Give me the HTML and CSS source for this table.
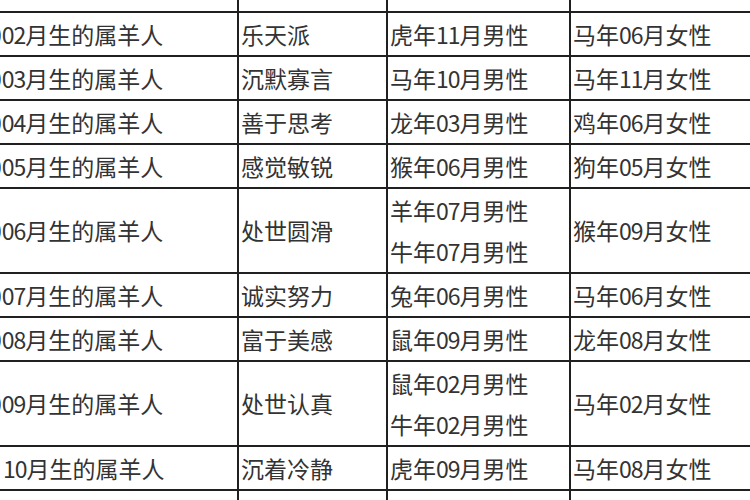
FILE: index.html
```html
<!DOCTYPE html>
<html lang="zh">
<head>
<meta charset="utf-8">
<title>属羊人</title>
<link rel="stylesheet" href="styles.css">
</head>
<body>
<div class="sheet">
  <div class="c first"></div>
  <div class="c"></div>
  <div class="c"></div>
  <div class="c"></div>

  <div class="c first"><span class="lead">0</span><span class="n">02</span>月生的属羊人</div>
  <div class="c">乐天派</div>
  <div class="c">虎年<span class="n">11</span>月男性</div>
  <div class="c">马年<span class="n">06</span>月女性</div>

  <div class="c first"><span class="lead">0</span><span class="n">03</span>月生的属羊人</div>
  <div class="c">沉默寡言</div>
  <div class="c">马年<span class="n">10</span>月男性</div>
  <div class="c">马年<span class="n">11</span>月女性</div>

  <div class="c first"><span class="lead">0</span><span class="n">04</span>月生的属羊人</div>
  <div class="c">善于思考</div>
  <div class="c">龙年<span class="n">03</span>月男性</div>
  <div class="c">鸡年<span class="n">06</span>月女性</div>

  <div class="c first"><span class="lead">0</span><span class="n">05</span>月生的属羊人</div>
  <div class="c">感觉敏锐</div>
  <div class="c">猴年<span class="n">06</span>月男性</div>
  <div class="c">狗年<span class="n">05</span>月女性</div>

  <div class="c first"><span class="lead">0</span><span class="n">06</span>月生的属羊人</div>
  <div class="c">处世圆滑</div>
  <div class="c two"><div>羊年<span class="n">07</span>月男性</div><div>牛年<span class="n">07</span>月男性</div></div>
  <div class="c">猴年<span class="n">09</span>月女性</div>

  <div class="c first"><span class="lead">0</span><span class="n">07</span>月生的属羊人</div>
  <div class="c">诚实努力</div>
  <div class="c">兔年<span class="n">06</span>月男性</div>
  <div class="c">马年<span class="n">06</span>月女性</div>

  <div class="c first"><span class="lead">0</span><span class="n">08</span>月生的属羊人</div>
  <div class="c">富于美感</div>
  <div class="c">鼠年<span class="n">09</span>月男性</div>
  <div class="c">龙年<span class="n">08</span>月女性</div>

  <div class="c first"><span class="lead">0</span><span class="n">09</span>月生的属羊人</div>
  <div class="c">处世认真</div>
  <div class="c two"><div>鼠年<span class="n">02</span>月男性</div><div>牛年<span class="n">02</span>月男性</div></div>
  <div class="c">马年<span class="n">02</span>月女性</div>

  <div class="c first"><span class="n">10</span>月生的属羊人</div>
  <div class="c">沉着冷静</div>
  <div class="c">虎年<span class="n">09</span>月男性</div>
  <div class="c">马年<span class="n">08</span>月女性</div>

  <div class="c first"></div>
  <div class="c"></div>
  <div class="c"></div>
  <div class="c"></div>
</div>
</body>
</html>
```

FILE: styles.css
```css
html, body {
  margin: 0;
  padding: 0;
  background: #ffffff;
  overflow: hidden;
}

body {
  width: 750px;
  height: 500px;
}

.sheet {
  display: grid;
  grid-template-columns: 265px 147px 181px 260px;
  grid-auto-rows: minmax(42px, auto);
  gap: 2px;
  padding: 2px;
  margin: -33px 0 0 -30px;
  background: #202020;
  width: max-content;
  font-family: "Noto Sans CJK SC", "Noto Sans", sans-serif;
  font-size: 23px;
  color: #333333;
}

.c {
  background: #ffffff;
  display: flex;
  align-items: center;
  padding: 0 0 0 2px;
  line-height: 41px;
  white-space: nowrap;
  overflow: hidden;
}

.c.first {
  padding-left: 31px;
}

.c.two {
  flex-direction: column;
  align-items: flex-start;
  justify-content: center;
  padding: 1px 0 0 2px;
}

.n {
  letter-spacing: -1px;
}

.lead {
  margin-left: -14px;
}
```
